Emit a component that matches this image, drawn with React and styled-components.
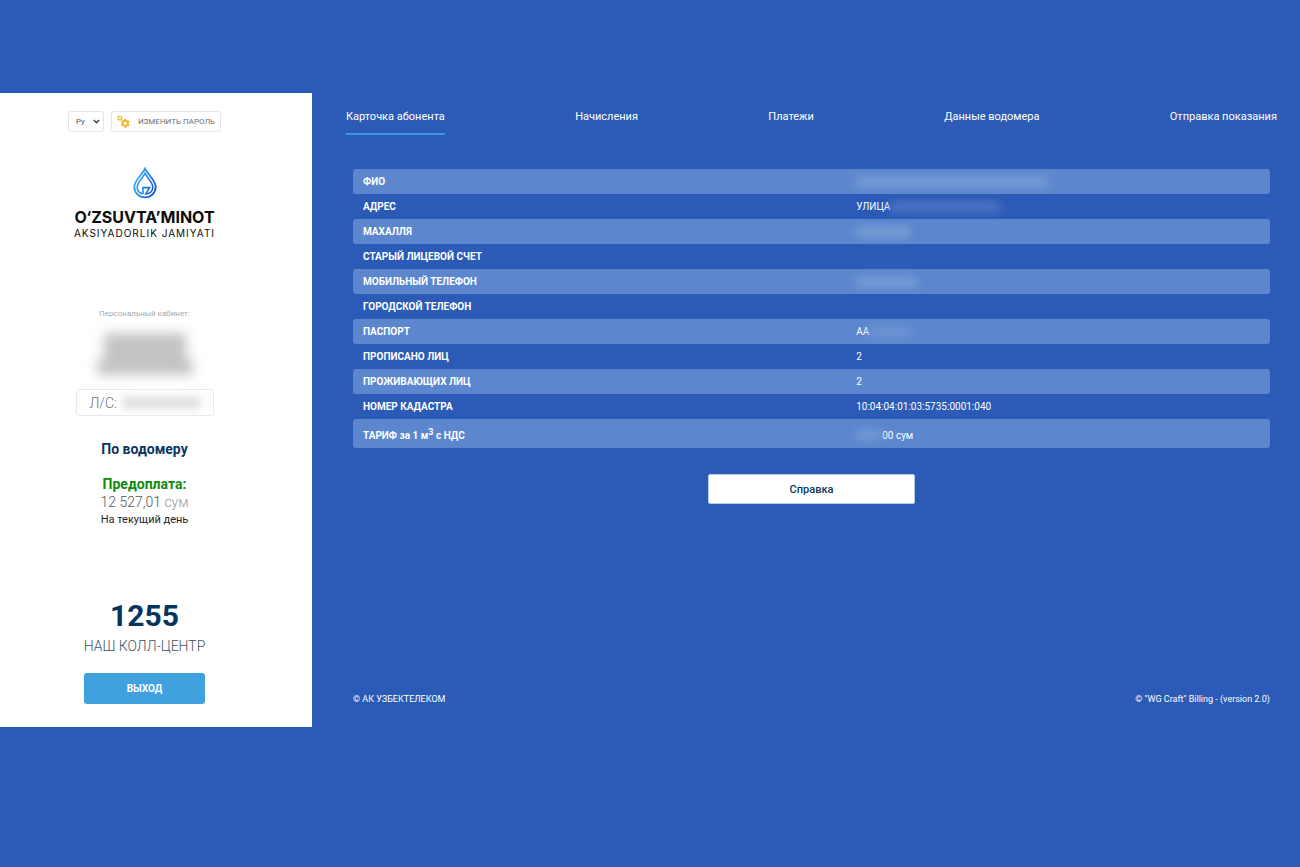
import React, { useState } from 'react';
import styled, { createGlobalStyle } from 'styled-components';

const GlobalStyle = createGlobalStyle`
    * {
        box-sizing: border-box;
    }
    body {
        margin: 0;
        background-color: #2b5bb6;
        font-family: Roboto, "Liberation Sans", sans-serif;
    }
    button, select {
        font-family: inherit;
    }
`;

const Page = styled.div`
    display: grid;
    grid-template-columns: 24% 1fr;
    min-height: 634px;
    margin: 93px 0;
`;

const Sidebar = styled.aside`
    display: flex;
    flex-direction: column;
    align-items: center;
    padding: 18px 23px 23px 0;
    background-color: #fff;
    text-align: center;
`;

const Toolbar = styled.div`
    display: flex;
    gap: 7px;
`;

const LangBox = styled.div`
    display: grid;
    align-items: center;

    > * {
        grid-area: 1 / 1;
    }
    svg {
        justify-self: end;
        margin-right: 4px;
        pointer-events: none;
    }
`;

const LangSelect = styled.select`
    appearance: none;
    width: 36px;
    height: 21px;
    padding: 0 0 0 7px;
    border: 1px solid #e6e6e8;
    border-radius: 3px;
    background-color: #fff;
    color: #55585c;
    font-size: 8px;
`;

const PasswordButton = styled.button`
    display: flex;
    align-items: center;
    gap: 8px;
    height: 21px;
    padding: 0 5px;
    border: 1px solid #e6e6e8;
    border-radius: 3px;
    background-color: #fff;
    color: #6c6f75;
    font-size: 8px;
    white-space: nowrap;
    cursor: pointer;
`;

const Logo = styled.div`
    display: flex;
    flex-direction: column;
    align-items: center;
    margin-top: 35px;
    font-family: Inter, "Open Sans", sans-serif;
    color: #0c0c0c;
    white-space: nowrap;

    .name {
        margin-top: 9px;
        font-size: 16px;
        line-height: 18px;
        font-weight: 700;
    }
    .kind {
        margin-top: 1px;
        font-size: 10px;
        line-height: 12px;
        letter-spacing: 1px;
    }
`;

const Cabinet = styled.section`
    display: flex;
    flex-direction: column;
    align-items: center;
    margin-top: 69px;

    > p {
        margin: 0;
        color: #a3a8ae;
        font-size: 8px;
        line-height: 12px;
    }
`;

const HiddenOwner = styled.div`
    display: flex;
    flex-direction: column;
    align-items: center;
    margin-top: 13px;
    filter: blur(6px);

    &::before, &::after {
        content: "";
        background-color: #c2c4c4;
    }
    &::before {
        width: 82px;
        height: 26px;
    }
    &::after {
        width: 96px;
        height: 16px;
    }
`;

const Account = styled.div`
    display: flex;
    align-items: center;
    gap: 5px;
    width: 138px;
    height: 27px;
    margin-top: 14px;
    padding-left: 13px;
    border: 1px solid #e9e9ec;
    border-radius: 3px;
    color: #6f7072;
    font-size: 14px;
    font-weight: 300;
`;

const Balance = styled.section`
    display: flex;
    flex-direction: column;
    margin-top: 24px;

    h2, h3, p {
        margin: 0;
    }
    h2 {
        color: #0c3562;
        font-size: 14px;
        line-height: 18px;
        font-weight: 700;
    }
    h3 {
        margin-top: 17px;
        color: #118a11;
        font-size: 14px;
        line-height: 18px;
        font-weight: 700;
    }
    .amount {
        color: #55585c;
        font-size: 14px;
        line-height: 18px;
        font-weight: 300;
    }
    .amount span {
        color: #96999d;
    }
    .note {
        color: #212529;
        font-size: 11px;
        line-height: 18px;
    }
`;

const CallCenter = styled.section`
    margin-top: auto;

    strong {
        display: block;
        color: #043560;
        font-size: 30px;
        line-height: 36px;
        font-weight: 700;
    }
    span {
        display: block;
        margin-top: 2px;
        color: #3f5266;
        font-size: 14px;
        line-height: 20px;
        font-weight: 300;
    }
`;

const ExitButton = styled.button`
    width: 121px;
    height: 31px;
    margin-top: 17px;
    border: 0;
    border-radius: 3px;
    background-color: #41a1df;
    color: #fff;
    font-size: 10px;
    font-weight: 700;
    cursor: pointer;
`;

const Main = styled.main`
    display: flex;
    flex-direction: column;
    padding: 15px 23px 20px 34px;
    color: #fff;
`;

const Tabs = styled.nav`
    display: flex;
    justify-content: space-between;
    height: 27px;
`;

const Tab = styled.a`
    padding-top: 1px;
    border-bottom: 2px solid ${props => props.$active ? '#4095e0' : 'transparent'};
    color: #fff;
    font-size: 11px;
    line-height: 16px;
    text-decoration: none;
    white-space: nowrap;
`;

const Content = styled.div`
    flex: 1;
    display: flex;
    flex-direction: column;
    align-items: center;
    padding: 34px 7px 0;
`;

const InfoTable = styled.table`
    width: 100%;
    border-spacing: 0;
    font-size: 10px;
    line-height: 15px;

    th, td {
        height: 25px;
        padding: 5px 10px;
        text-align: left;
        vertical-align: middle;
    }
    th {
        width: 54%;
        font-weight: 700;
    }
    td {
        padding-left: 8px;
    }
    tr:nth-child(odd) > * {
        background-color: #5c87ce;
    }
    tr:last-child > * {
        height: 29px;
        padding: 7px 10px 4px;
    }
    tr:last-child > td {
        padding-left: 8px;
    }
    th:first-child {
        border-radius: 3px 0 0 3px;
    }
    td:last-child {
        border-radius: 0 3px 3px 0;
    }
    sup {
        font-size: 9px;
        line-height: 0;
    }
`;

const Value = styled.div`
    display: flex;
    align-items: center;
`;

// private data is shown as a smudge instead of text
const Smudge = styled.span`
    width: ${props => props.$width}px;
    height: ${props => props.$height || 10}px;
    background-color: ${props => props.$color || '#7a9cd6'};
    filter: blur(4px);
`;

const CertButton = styled.button`
    width: 207px;
    height: 30px;
    margin-top: 26px;
    border: 1px solid #b9cbea;
    border-radius: 2px;
    background-color: #fff;
    color: #0c3562;
    font-size: 11px;
    font-weight: 500;
    cursor: pointer;
`;

const Footer = styled.footer`
    display: flex;
    justify-content: space-between;
    padding: 0 7px;
    font-size: 9px;
    line-height: 16px;
`;

const tabs = ['Карточка абонента', 'Начисления', 'Платежи', 'Данные водомера', 'Отправка показания'];

const rows = [
    { label: 'ФИО', value: <Smudge $width={192} /> },
    { label: 'АДРЕС', value: <>УЛИЦА<Smudge $width={110} $color="#5075c5" /></> },
    { label: 'МАХАЛЛЯ', value: <Smudge $width={54} /> },
    { label: 'СТАРЫЙ ЛИЦЕВОЙ СЧЕТ', value: '' },
    { label: 'МОБИЛЬНЫЙ ТЕЛЕФОН', value: <Smudge $width={61} /> },
    { label: 'ГОРОДСКОЙ ТЕЛЕФОН', value: '' },
    { label: 'ПАСПОРТ', value: <>AA<Smudge $width={42} $color="#7094d3" /></> },
    { label: 'ПРОПИСАНО ЛИЦ', value: '2' },
    { label: 'ПРОЖИВАЮЩИХ ЛИЦ', value: '2' },
    { label: 'НОМЕР КАДАСТРА', value: '10:04:04:01:03:5735:0001:040' },
    { label: <>ТАРИФ за 1 м<sup>3</sup> с НДС</>, value: <><Smudge $width={26} $color="#7598d4" />00 сум</> },
];

const gearTeeth = [0, 60, 120, 180, 240, 300];

function Gear({ x, y, r }) {
    return (
        <g transform={`translate(${x} ${y})`}>
            <circle r={r * 0.62} fill="none" stroke="#f5b52c" strokeWidth={r * 0.42} />
            {gearTeeth.map(angle => (
                <rect
                    key={angle}
                    x={-r * 0.24}
                    y={-r * 1.08}
                    width={r * 0.48}
                    height={r * 0.38}
                    fill="#f5b52c"
                    transform={`rotate(${angle})`}
                />
            ))}
        </g>
    )
}

function GearsIcon() {
    return (
        <svg width="13" height="13" viewBox="0 0 14 14" aria-hidden="true">
            <Gear x={3.2} y={3.4} r={2.8} />
            <Gear x={8.9} y={8.9} r={4.5} />
        </svg>
    )
}

function ChevronIcon() {
    return (
        <svg width="7" height="5" viewBox="0 0 7 5" fill="none" aria-hidden="true">
            <path d="M0.800 1L3.500 3.700 6.200 1" stroke="#3c3f43" strokeWidth="1.4" />
        </svg>
    )
}

function DropIcon() {
    return (
        <svg width="24" height="32" viewBox="0 0 24 32" fill="none" aria-hidden="true">
            <defs>
                <linearGradient id="drop" gradientUnits="userSpaceOnUse" x1="1" y1="12" x2="23" y2="22">
                    <stop offset="0" stopColor="#35b3ee" />
                    <stop offset="1" stopColor="#1853d8" />
                </linearGradient>
            </defs>
            <g stroke="url(#drop)">
                <path strokeWidth="1.8" d="M12 1.6C10.200 6.600 1.300 13 1.300 20a10.700 10.300 0 0 0 21.400 0C22.700 13 13.800 6.600 12 1.600z" />
                <path strokeWidth="1.6" d="M9.400 27C6.100 25.800 4.200 23.300 4.200 20.200 4.200 15.600 9.600 10.800 12 6.400 14.400 10.800 19.800 15.600 19.800 20.200 19.800 24.100 16.800 27 12.700 27L16.600 20.600H9.900V27" />
            </g>
        </svg>
    )
}

export default function App() {

    const [activeTab, setActiveTab] = useState(0);
    const [lang, setLang] = useState('ru');

    const onTabClick = (e, index) => {
        e.preventDefault();
        setActiveTab(index);
    }

    return (
        <>
            <GlobalStyle />
            <Page>
                <Sidebar>
                    <Toolbar>
                        <LangBox>
                            <LangSelect aria-label="Язык" value={lang} onChange={e => setLang(e.target.value)}>
                                <option value="ru">Ру</option>
                                <option value="uz">Uz</option>
                            </LangSelect>
                            <ChevronIcon />
                        </LangBox>
                        <PasswordButton type="button">
                            <GearsIcon />
                            ИЗМЕНИТЬ ПАРОЛЬ
                        </PasswordButton>
                    </Toolbar>
                    <Logo>
                        <DropIcon />
                        <span className="name">O‘ZSUVTA’MINOT</span>
                        <span className="kind">AKSIYADORLIK JAMIYATI</span>
                    </Logo>
                    <Cabinet>
                        <p>Персональный кабинет:</p>
                        <HiddenOwner />
                        <Account>
                            Л/С:
                            <Smudge $width={78} $height={13} $color="#e0e0e1" />
                        </Account>
                    </Cabinet>
                    <Balance>
                        <h2>По водомеру</h2>
                        <h3>Предоплата:</h3>
                        <p className="amount">12 527,01 <span>сум</span></p>
                        <p className="note">На текущий день</p>
                    </Balance>
                    <CallCenter>
                        <strong>1255</strong>
                        <span>НАШ КОЛЛ-ЦЕНТР</span>
                    </CallCenter>
                    <ExitButton type="button">ВЫХОД</ExitButton>
                </Sidebar>
                <Main>
                    <Tabs>
                        {tabs.map((tab, index) => (
                            <Tab
                                key={tab}
                                href="#"
                                $active={index === activeTab}
                                onClick={e => onTabClick(e, index)}
                            >
                                {tab}
                            </Tab>
                        ))}
                    </Tabs>
                    <Content>
                        <InfoTable>
                            <tbody>
                                {rows.map((row, index) => (
                                    <tr key={index}>
                                        <th scope="row">{row.label}</th>
                                        <td><Value>{row.value}</Value></td>
                                    </tr>
                                ))}
                            </tbody>
                        </InfoTable>
                        <CertButton type="button">Справка</CertButton>
                    </Content>
                    <Footer>
                        <span>© АК УЗБЕКТЕЛЕКОМ</span>
                        <span>© "WG Craft" Billing - (version 2.0)</span>
                    </Footer>
                </Main>
            </Page>
        </>
    )
}
